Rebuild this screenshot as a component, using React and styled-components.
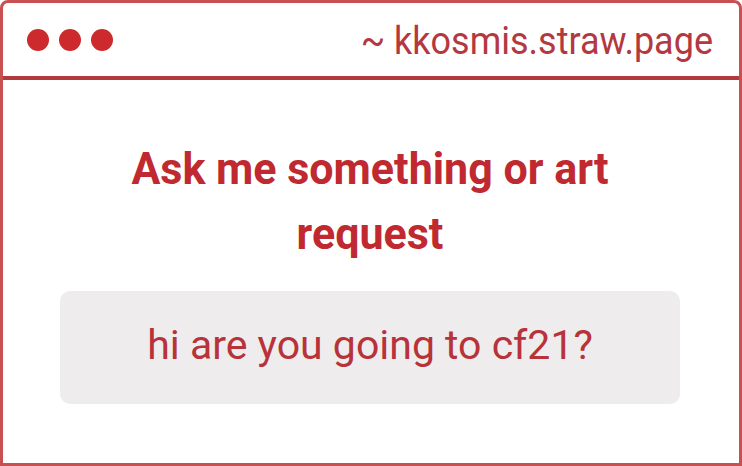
import React from "react";
import styled, { createGlobalStyle } from "styled-components";

const Global = createGlobalStyle`
  html, body { margin: 0; padding: 0; background: #fff; }
  * { box-sizing: border-box; }
`;

const Frame = styled.div`
  width: 742px;
  height: 466px;
  border: 3px solid #c85050;
  border-radius: 8px 8px 0 0;
  display: flex;
  flex-direction: column;
  font-family: Roboto, "Liberation Sans", sans-serif;
  background: #fff;
`;

const TitleBar = styled.div`
  height: 77px;
  flex-shrink: 0;
  border-bottom: 4px solid #b23a3e;
  display: flex;
  align-items: center;
  justify-content: space-between;
  padding: 0 26px 0 24px;
`;

const Dots = styled.div`
  display: flex;
  gap: 10px;
`;

const Dot = styled.span`
  width: 22px;
  height: 22px;
  border-radius: 50%;
  background: #cc2a2c;
`;

const Url = styled.div`
  font-size: 36px;
  line-height: 40px;
  color: #b3383f;
  transform: scaleY(1.06);
  padding-top: 2px;
`;

const Body = styled.div`
  flex: 1;
  display: flex;
  flex-direction: column;
  align-items: center;
  padding: 59px 59px 0 57px;
`;

const Heading = styled.h1`
  margin: 0;
  font-size: 43px;
  font-weight: 700;
  line-height: 62px;
  color: #c0292f;
  text-align: center;
  max-width: 540px;
  transform: scaleY(1.05);
`;

const Question = styled.div`
  margin-top: 28px;
  width: 100%;
  height: 113px;
  padding-bottom: 6px;
  border-radius: 10px;
  background: #eeeced;
  display: flex;
  align-items: center;
  justify-content: center;
  font-size: 41px;
  color: #b8323a;
`;

export default function App() {
  return (
    <>
      <Global />
      <Frame>
        <TitleBar>
          <Dots>
            <Dot />
            <Dot />
            <Dot />
          </Dots>
          <Url>~ kkosmis.straw.page</Url>
        </TitleBar>
        <Body>
          <Heading>Ask me something or art request</Heading>
          <Question>hi are you going to cf21?</Question>
        </Body>
      </Frame>
    </>
  );
}
